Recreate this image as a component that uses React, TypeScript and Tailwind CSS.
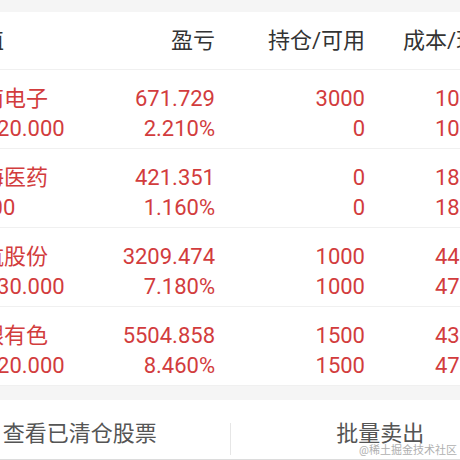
const rows = [
  { name: "深南电子", value: "31020.000", pl: "671.729", pct: "2.210%", hold: "3000", avail: "0", cost: "10.133", price: "10.357" },
  { name: "上海医药", value: "0.000", pl: "421.351", pct: "1.160%", hold: "0", avail: "0", cost: "18.206", price: "18.417" },
  { name: "中航股份", value: "47930.000", pl: "3209.474", pct: "7.180%", hold: "1000", avail: "1000", cost: "44.700", price: "47.909" },
  { name: "白银有色", value: "70620.000", pl: "5504.858", pct: "8.460%", hold: "1500", avail: "1500", cost: "43.379", price: "47.049" },
];

const font = { fontFamily: "Roboto, 'Noto Sans CJK SC', sans-serif" };

export default function App() {
  return (
    <div className="relative w-[460px] h-[460px] overflow-hidden bg-white" style={font}>
      <div className="w-[600px] -ml-[70px] flex flex-col">
        {/* top strip */}
        <div className="h-[12px] bg-[#f5f5f5]" />

        {/* header */}
        <div className="h-[58px] px-[30px] grid grid-cols-[155px_100px_150px_135px] items-center border-b border-[#f0f0f0] text-[22px] text-[#333]">
          <div>市值</div>
          <div className="text-right">盈亏</div>
          <div className="text-right">持仓/可用</div>
          <div className="text-right whitespace-nowrap">成本/现价</div>
        </div>

        {/* rows */}
        {rows.map((r) => (
          <div
            key={r.name}
            className="h-[79px] px-[30px] pt-[10px] grid grid-cols-[155px_100px_150px_135px] content-center border-b border-[#f0f0f0] text-[22px] leading-[30px] text-[#d23c3d]"
          >
            <div className="flex flex-col">
              <span>{r.name}</span>
              <span>{r.value}</span>
            </div>
            <div className="flex flex-col items-end">
              <span>{r.pl}</span>
              <span>{r.pct}</span>
            </div>
            <div className="flex flex-col items-end">
              <span>{r.hold}</span>
              <span>{r.avail}</span>
            </div>
            <div className="flex flex-col items-start pl-[70px]">
              <span>{r.cost}</span>
              <span>{r.price}</span>
            </div>
          </div>
        ))}

        <div className="h-[14px] bg-[#f5f5f5]" />

        {/* bottom bar */}
        <div className="h-[60px] flex items-start border-b border-[#dcdcdc] text-[22px] text-[#555]">
          <div className="flex-1 flex justify-center pt-[17px]">查看已清仓股票</div>
          <div className="w-px h-[32px] mt-[23px] bg-[#e6e6e6]" />
          <div className="flex-1 flex justify-center pt-[17px]">批量卖出</div>
        </div>
      </div>

      <div className="absolute right-[3px] bottom-[4px] text-[11px] leading-none text-[#b0b0b0]">
        @稀土掘金技术社区
      </div>
    </div>
  );
}
